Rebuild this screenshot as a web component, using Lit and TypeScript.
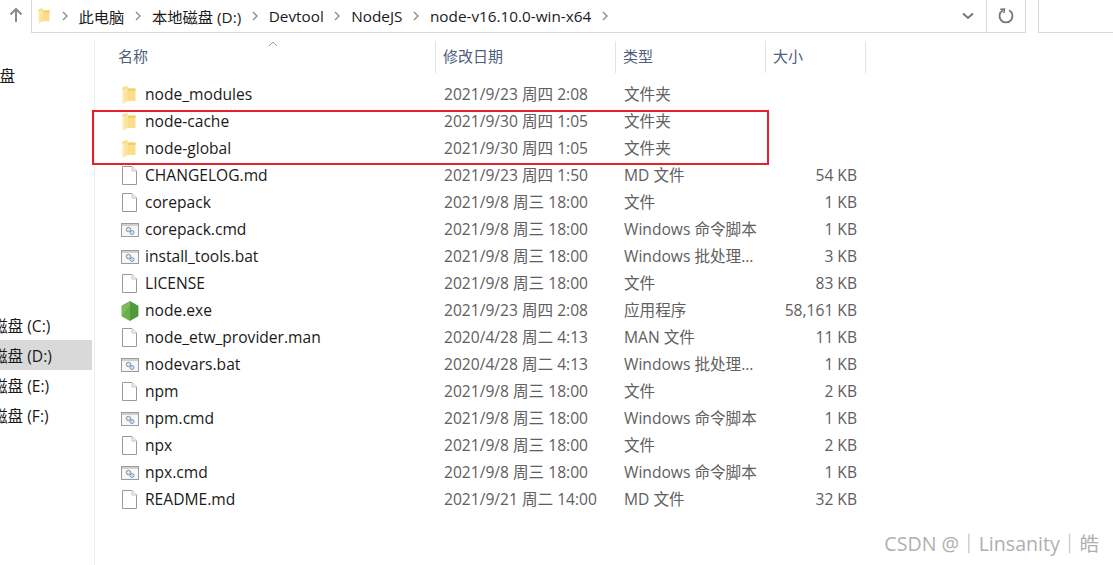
import { LitElement, html, css, svg } from "lit";
import { customElement } from "lit/decorators.js";

type Row = [string, string, string, string, string];
const rows: Row[] = [
  ["folder", "node_modules", "2021/9/23 周四 2:08", "文件夹", ""],
  ["folder", "node-cache", "2021/9/30 周四 1:05", "文件夹", ""],
  ["folder", "node-global", "2021/9/30 周四 1:05", "文件夹", ""],
  ["file", "CHANGELOG.md", "2021/9/23 周四 1:50", "MD 文件", "54 KB"],
  ["file", "corepack", "2021/9/8 周三 18:00", "文件", "1 KB"],
  ["cmd", "corepack.cmd", "2021/9/8 周三 18:00", "Windows 命令脚本", "1 KB"],
  ["cmd", "install_tools.bat", "2021/9/8 周三 18:00", "Windows 批处理...", "3 KB"],
  ["file", "LICENSE", "2021/9/8 周三 18:00", "文件", "83 KB"],
  ["node", "node.exe", "2021/9/23 周四 2:08", "应用程序", "58,161 KB"],
  ["file", "node_etw_provider.man", "2020/4/28 周二 4:13", "MAN 文件", "11 KB"],
  ["cmd", "nodevars.bat", "2020/4/28 周二 4:13", "Windows 批处理...", "1 KB"],
  ["file", "npm", "2021/9/8 周三 18:00", "文件", "2 KB"],
  ["cmd", "npm.cmd", "2021/9/8 周三 18:00", "Windows 命令脚本", "1 KB"],
  ["file", "npx", "2021/9/8 周三 18:00", "文件", "2 KB"],
  ["cmd", "npx.cmd", "2021/9/8 周三 18:00", "Windows 命令脚本", "1 KB"],
  ["file", "README.md", "2021/9/21 周二 14:00", "MD 文件", "32 KB"],
];

const folder = (w = 14, h = 18) => html`<svg width=${w} height=${h} viewBox="0 0 14 18">
  <path d="M5 2.5 H13.5 V15 H5 Z" fill="#fbdd8a"/>
  <path d="M5 2.5 H13.5 V5 H5 Z" fill="#f5cf6a"/>
  <path d="M0.5 1.5 L5.5 0 V15 L2 17.8 L0.5 17 Z" fill="#fdeab0"/>
  <path d="M2.5 15 H6 V4 L4.5 4.5 L2.5 6 Z" fill="#fbe39c"/>
  <path d="M0.5 1.5 L5.5 0 V2.5 L0.5 4 Z" fill="#f8dc88"/>
</svg>`;

const icons: Record<string, () => unknown> = {
  folder: () => folder(),
  file: () => html`<svg width="15" height="19" viewBox="0 0 15 19">
    <path d="M0.5 0.5 H10 L14.5 5 V18.5 H0.5 Z" fill="#fff" stroke="#9a9a9a"/>
    <path d="M10 0.5 V5 H14.5" fill="#f2f2f2" stroke="#c4c4c4"/>
  </svg>`,
  cmd: () => html`<svg width="18" height="14" viewBox="0 0 18 14">
    <rect x="0.5" y="0.5" width="17" height="13" fill="#f7f7f7" stroke="#9c9c9c"/>
    <rect x="1" y="1" width="16" height="2" fill="#cfcfcf"/>
    <circle cx="7.5" cy="6.5" r="2.2" fill="#e4e4e4" stroke="#8f8f8f"/>
    <circle cx="11" cy="9.5" r="2" fill="#cfe0f2" stroke="#6f9fd0"/>
  </svg>`,
  node: () => html`<svg width="18" height="20" viewBox="0 0 18 20">
    <path d="M9 0.5 L17 5 V15 L9 19.5 L1 15 V5 Z" fill="#6cae4c" stroke="#6cae4c" stroke-linejoin="round"/>
    <path d="M9 0.5 L17 5 V15 L9 19.5 Z" fill="#4f9a3f"/>
    <path d="M1 5 L9 0.5 L9 5 L5 9 L1 15 Z" fill="#7dbb55"/>
  </svg>`,
};

const sep = svg`<path d="M2 1 L6 5 L2 9" fill="none" stroke="#8c8c8c" stroke-width="1.4"/>`;
const chev = html`<svg class="sep" width="8" height="10" viewBox="0 0 8 10">${sep}</svg>`;

@customElement("app-root")
export class AppRoot extends LitElement {
  static styles = css`
    :host {
      display: block;
      width: 1113px;
      height: 565px;
      position: relative;
      overflow: hidden;
      background: #fff;
      color: #1a1a1a;
      font-family: "Open Sans", "Noto Sans CJK SC", sans-serif;
      font-size: 15.6px;
    }
    .top { display: flex; height: 33px; }
    .up { width: 31px; display: flex; justify-content: center; padding-top: 7px; box-sizing: border-box; }
    .addr {
      width: 995px; box-sizing: border-box;
      border-left: 1px solid #d9d9d9; border-right: 1px solid #d9d9d9; border-bottom: 1px solid #d9d9d9;
      display: flex; align-items: center; padding-left: 6px;
    }
    .crumbs { display: flex; align-items: center; flex: 1; height: 26px; font-size: 15.3px; }
    .crumbs .fold { margin-right: 1px; display: flex; }
    .crumbs span { white-space: nowrap; }
    .sep { margin: 0 10px 0 9.5px; flex: none; }
    .drop { width: 38px; display: flex; justify-content: center; padding-left: 2px; box-sizing: border-box; }
    .refresh {
      width: 39px; height: 100%; border-left: 1px solid #d9d9d9; box-sizing: border-box;
      display: flex; align-items: center; justify-content: center;
    }
    .search {
      margin-left: 12px; flex: 1;
      border-left: 1px solid #d9d9d9; border-bottom: 1px solid #d9d9d9;
    }
    .body { display: flex; height: 532px; }
    .side {
      width: 95px; box-sizing: border-box; border-right: 1px solid #efefef;
      margin-top: 7px; overflow: hidden; flex: none;
    }
    .nav { height: 30px; width: 92px; display: flex; align-items: center; white-space: nowrap; font-size: 15.6px; }
    .nav.sel { background: #d9d9d9; }
    .nav span { margin-left: -8px; }
    .first { margin-top: 20px; }
    .first span { margin-left: -16px; }
    .gap { height: 220px; }
    .main { flex: 1; min-width: 0; position: relative; }
    .cols { display: grid; grid-template-columns: 341px 180px 150px 100px; }
    .head { height: 32px; margin-top: 8px; color: #4c607a; font-size: 15px; position: relative; }
    .head div { border-right: 1px solid #e3e3e3; padding-left: 7px; line-height: 30px; box-sizing: border-box; }
    .head div:first-of-type { padding-left: 23px; }
    .sort { position: absolute; left: 173px; top: 0px; }
    .list { margin-top: 8px; }
    .row { height: 27px; align-items: center; line-height: 27px; white-space: nowrap; }
    .name { display: flex; align-items: center; padding-left: 23px; }
    .ico { width: 27px; display: flex; justify-content: flex-start; align-items: center; margin-left: 4px; margin-right: -4px; flex: none; }
    .ico.wide { margin-left: 3px; margin-right: -3px; }
    .date { padding-left: 8px; color: #606060; }
    .type { padding-left: 8px; color: #606060; }
    .size { text-align: right; padding-right: 9px; color: #606060; }
    .mark {
      position: absolute; left: 92px; top: 110px; width: 673px; height: 51px;
      border: 2px solid #e8202c; pointer-events: none;
    }
    .wm {
      position: absolute; right: 14px; top: 528px; font-size: 19.6px; color: #b0b0b0; white-space: nowrap;
    }
  `;

  render() {
    return html`
      <div class="top">
        <div class="up">
          <svg width="14" height="16" viewBox="0 0 14 16"><path d="M7 15 V2 M1.5 7.5 L7 2 L12.5 7.5" fill="none" stroke="#8a8a8a" stroke-width="2"/></svg>
        </div>
        <div class="addr">
          <div class="crumbs">
            <div class="fold">${folder(12, 16)}</div>
            ${chev}<span>此电脑</span>${chev}<span>本地磁盘 (D:)</span>${chev}<span>Devtool</span>${chev}<span>NodeJS</span>${chev}<span>node-v16.10.0-win-x64</span>${chev}
          </div>
          <div class="drop">
            <svg width="12" height="8" viewBox="0 0 12 8"><path d="M1 1.5 L6 6 L11 1.5" fill="none" stroke="#777" stroke-width="2"/></svg>
          </div>
          <div class="refresh">
            <svg width="16" height="16" viewBox="0 0 16 16"><path d="M5 2.2 A6.5 6.5 0 1 0 11 2.2" fill="none" stroke="#777" stroke-width="1.8"/><path d="M2.2 1.2 L6.4 1 L6 5" fill="none" stroke="#777" stroke-width="1.6"/></svg>
          </div>
        </div>
        <div class="search"></div>
      </div>
      <div class="body">
        <div class="side">
          <div class="nav first"><span>磁盘</span></div>
          <div class="gap"></div>
          <div class="nav"><span>磁盘 (C:)</span></div>
          <div class="nav sel"><span>磁盘 (D:)</span></div>
          <div class="nav"><span>磁盘 (E:)</span></div>
          <div class="nav"><span>磁盘 (F:)</span></div>
        </div>
        <div class="main">
          <div class="cols head">
            <svg class="sort" width="10" height="6" viewBox="0 0 10 6"><path d="M1 5 L5 1 L9 5" fill="none" stroke="#9a9a9a"/></svg>
            <div>名称</div><div>修改日期</div><div>类型</div><div>大小</div>
          </div>
          <div class="list">
            ${rows.map(
              (r) => html`<div class="cols row">
                <div class="name"><span class="ico ${r[0] === "cmd" || r[0] === "node" ? "wide" : ""}">${icons[r[0]]()}</span><span>${r[1]}</span></div>
                <div class="date">${r[2]}</div>
                <div class="type">${r[3]}</div>
                <div class="size">${r[4]}</div>
              </div>`
            )}
          </div>
        </div>
      </div>
      <div class="mark"></div>
      <div class="wm">CSDN @｜Linsanity｜皓</div>
    `;
  }
}
